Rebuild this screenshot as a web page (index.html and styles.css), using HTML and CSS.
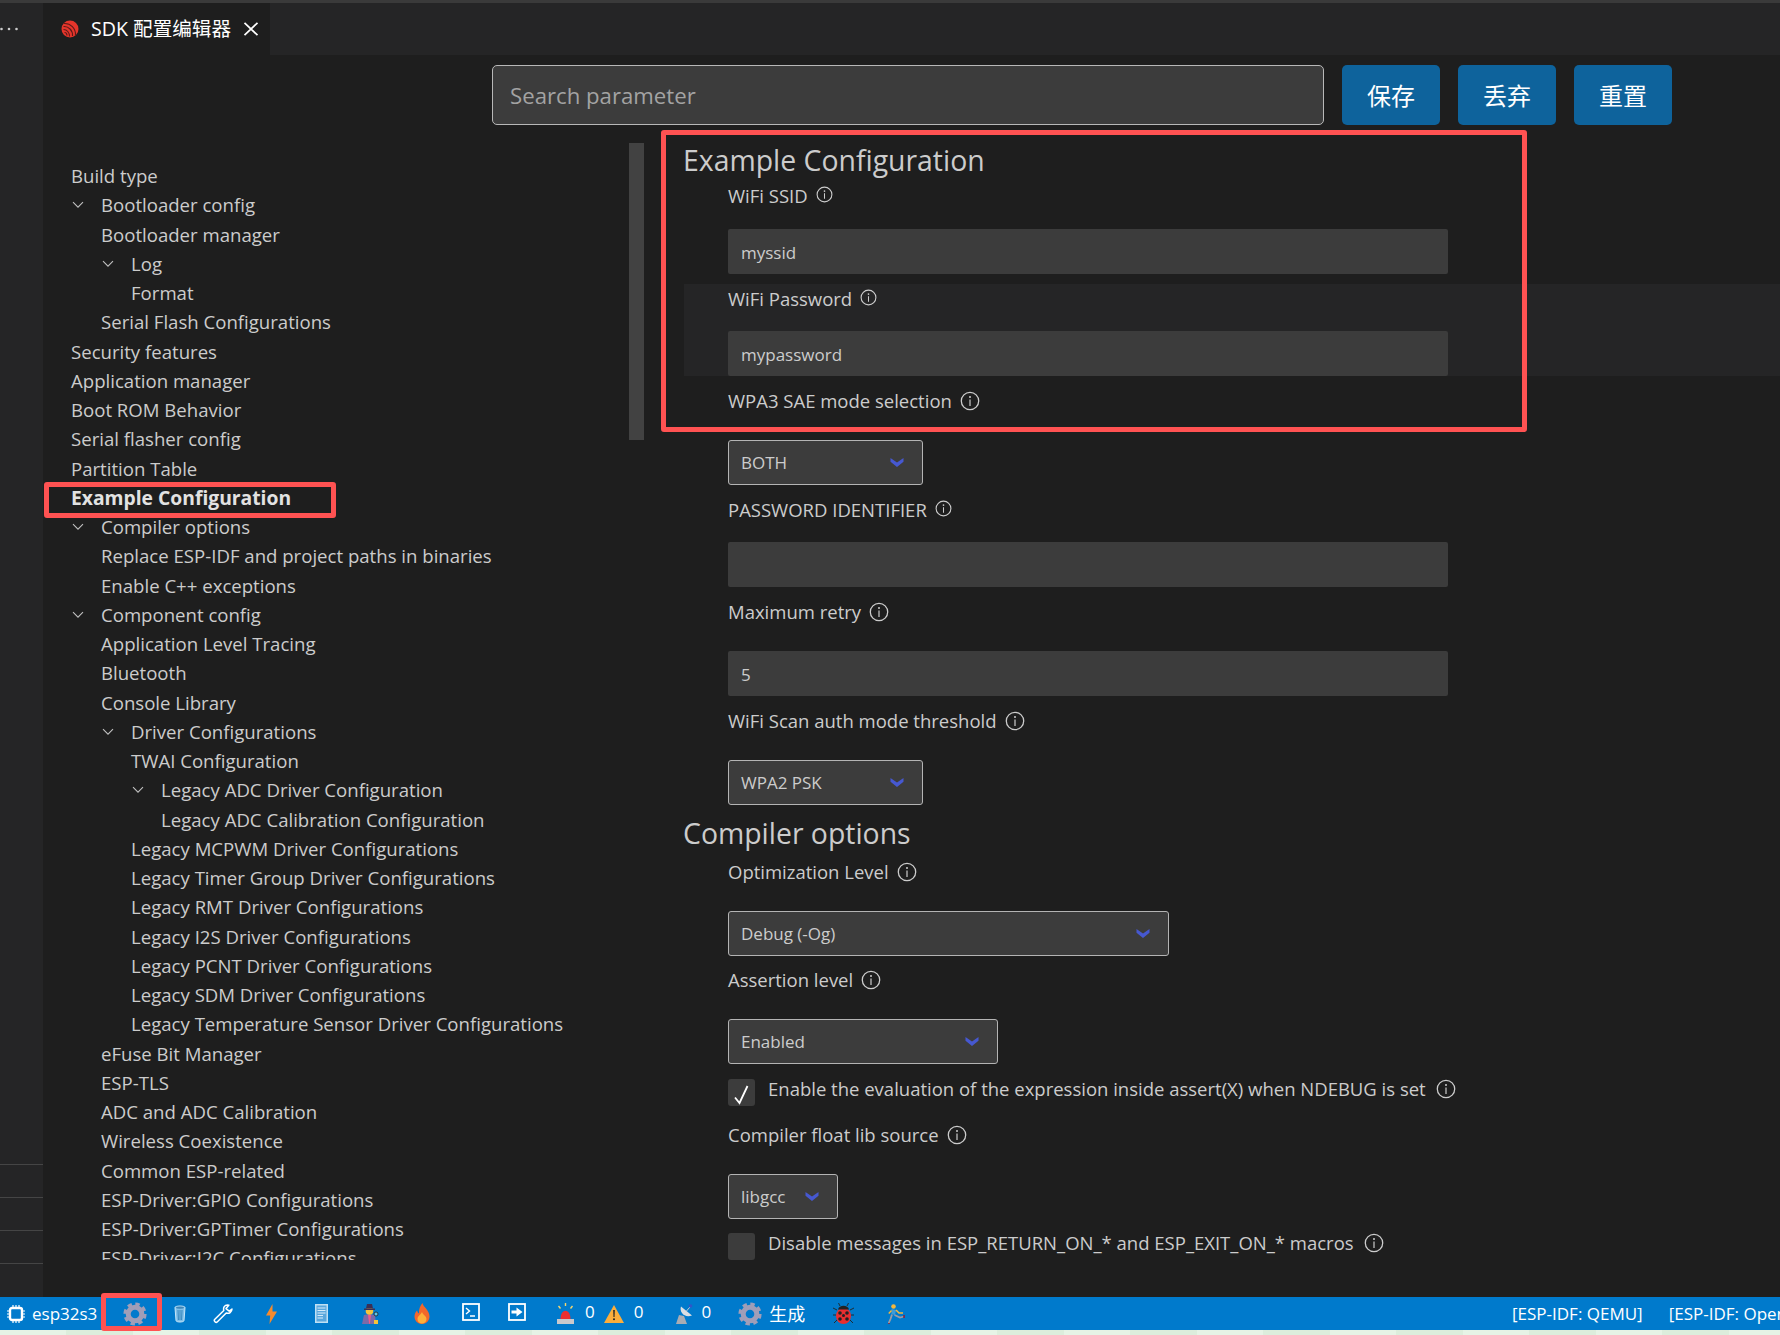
FILE: index.html
```html
<!DOCTYPE html>
<html lang="zh">
<head>
<meta charset="utf-8">
<title>SDK 配置编辑器</title>
<link rel="stylesheet" href="styles.css">
</head>
<body>
<svg class="defs" width="0" height="0" aria-hidden="true">
  <symbol id="info" viewBox="0 0 20 20"><circle cx="10" cy="10" r="8.7" fill="none" stroke="currentColor" stroke-width="1.3"/><circle cx="10" cy="6" r="1" fill="currentColor"/><rect x="9.4" y="8.5" width="1.2" height="6.5" fill="currentColor"/></symbol>
  <symbol id="chev" viewBox="0 0 14 9"><path d="M.5 0 7 4.600 13.500 0V3.800L7 9 .5 3.800Z" fill="currentColor"/></symbol>
  <symbol id="twisty" viewBox="0 0 12 8"><path d="M1 1.2 6 6.200 11 1.200" fill="none" stroke="currentColor" stroke-width="1.1"/></symbol>
  <symbol id="gear" viewBox="0 0 24 24"><circle cx="12" cy="12" r="6.800" fill="none" stroke="#a09eb8" stroke-width="5"/><circle cx="12" cy="12" r="9.800" fill="none" stroke="#a09eb8" stroke-width="3.600" stroke-dasharray="4.300 3.400"/></symbol>
</svg>
<div class="window">
  <div class="top-strip"></div>
  <header class="tabbar">
    <div class="more"><svg class="more-dots" viewBox="0 0 20 4"><circle cx="1.500" cy="2" r="1.300" fill="#ccc"/><circle cx="9" cy="2" r="1.300" fill="#ccc"/><circle cx="16.500" cy="2" r="1.300" fill="#ccc"/></svg></div>
    <div class="tab">
      <svg class="tab-logo" viewBox="0 0 18 18"><circle cx="9" cy="9" r="8.500" fill="#e5352b"/><path d="M3 3.500C9.500 3 15 8.500 14.500 15.500M2.500 6.500C7.500 6 12 10.500 11.500 16M2.500 9.500C6 9.500 8.500 12.500 8.500 16.500M3.500 12.500C5 12.500 6 14 6 15.500" fill="none" stroke="#5b1a18" stroke-width="1.100"/></svg>
      <span class="tab-title">SDK 配置编辑器</span>
      <svg class="tab-close" viewBox="0 0 16 14"><path d="M1.500 .8 14.500 13.200M14.500 .8 1.500 13.200" stroke="#fff" stroke-width="1.700" fill="none"/></svg>
    </div>
  </header>
  <div class="workbench">
    <aside class="activity">
      <div class="activity-rows">
        <div class="activity-row"></div>
        <div class="activity-row"></div>
        <div class="activity-row"></div>
        <div class="activity-row"></div>
      </div>
    </aside>
    <main class="editor">
      <div class="searchbar">
        <div class="search">Search parameter</div>
        <button class="action">保存</button>
        <button class="action">丢弃</button>
        <button class="action">重置</button>
      </div>
      <div class="panes">
        <nav class="tree">
          <div class="scrollbar"></div>
          <div class="node l0">Build type</div>
          <div class="node l1"><svg class="twisty"><use href="#twisty"/></svg>Bootloader config</div>
          <div class="node l1">Bootloader manager</div>
          <div class="node l2"><svg class="twisty"><use href="#twisty"/></svg>Log</div>
          <div class="node l2">Format</div>
          <div class="node l1">Serial Flash Configurations</div>
          <div class="node l0">Security features</div>
          <div class="node l0">Application manager</div>
          <div class="node l0">Boot ROM Behavior</div>
          <div class="node l0">Serial flasher config</div>
          <div class="node l0">Partition Table</div>
          <div class="node l0 active">Example Configuration</div>
          <div class="node l1"><svg class="twisty"><use href="#twisty"/></svg>Compiler options</div>
          <div class="node l1">Replace ESP-IDF and project paths in binaries</div>
          <div class="node l1">Enable C++ exceptions</div>
          <div class="node l1"><svg class="twisty"><use href="#twisty"/></svg>Component config</div>
          <div class="node l1">Application Level Tracing</div>
          <div class="node l1">Bluetooth</div>
          <div class="node l1">Console Library</div>
          <div class="node l2"><svg class="twisty"><use href="#twisty"/></svg>Driver Configurations</div>
          <div class="node l2">TWAI Configuration</div>
          <div class="node l3"><svg class="twisty"><use href="#twisty"/></svg>Legacy ADC Driver Configuration</div>
          <div class="node l3">Legacy ADC Calibration Configuration</div>
          <div class="node l2">Legacy MCPWM Driver Configurations</div>
          <div class="node l2">Legacy Timer Group Driver Configurations</div>
          <div class="node l2">Legacy RMT Driver Configurations</div>
          <div class="node l2">Legacy I2S Driver Configurations</div>
          <div class="node l2">Legacy PCNT Driver Configurations</div>
          <div class="node l2">Legacy SDM Driver Configurations</div>
          <div class="node l2">Legacy Temperature Sensor Driver Configurations</div>
          <div class="node l1">eFuse Bit Manager</div>
          <div class="node l1">ESP-TLS</div>
          <div class="node l1">ADC and ADC Calibration</div>
          <div class="node l1">Wireless Coexistence</div>
          <div class="node l1">Common ESP-related</div>
          <div class="node l1">ESP-Driver:GPIO Configurations</div>
          <div class="node l1">ESP-Driver:GPTimer Configurations</div>
          <div class="node l1">ESP-Driver:I2C Configurations</div>
        </nav>
        <section class="settings">
          <h2 class="group first">Example Configuration</h2>
          <div class="field tight">
            <div class="label">WiFi SSID<svg class="info small"><use href="#info"/></svg></div>
            <div class="textbox">myssid</div>
          </div>
          <div class="field tight shaded">
            <div class="label">WiFi Password<svg class="info small"><use href="#info"/></svg></div>
            <div class="textbox">mypassword</div>
          </div>
          <div class="field">
            <div class="label">WPA3 SAE mode selection<svg class="info"><use href="#info"/></svg></div>
            <div class="select w-both">BOTH<svg class="chev"><use href="#chev"/></svg></div>
          </div>
          <div class="field tight">
            <div class="label">PASSWORD IDENTIFIER<svg class="info small"><use href="#info"/></svg></div>
            <div class="textbox"></div>
          </div>
          <div class="field">
            <div class="label">Maximum retry<svg class="info"><use href="#info"/></svg></div>
            <div class="textbox">5</div>
          </div>
          <div class="field">
            <div class="label">WiFi Scan auth mode threshold<svg class="info"><use href="#info"/></svg></div>
            <div class="select w-both">WPA2 PSK<svg class="chev"><use href="#chev"/></svg></div>
          </div>
          <h2 class="group">Compiler options</h2>
          <div class="field">
            <div class="label">Optimization Level<svg class="info"><use href="#info"/></svg></div>
            <div class="select w-debug">Debug (-Og)<svg class="chev"><use href="#chev"/></svg></div>
          </div>
          <div class="field">
            <div class="label">Assertion level<svg class="info"><use href="#info"/></svg></div>
            <div class="select w-enabled">Enabled<svg class="chev"><use href="#chev"/></svg></div>
          </div>
          <div class="check-row">
            <span class="checkbox"><svg class="tick" viewBox="0 0 18 20"><path d="M2 12.500 6.500 18 14.500 1" fill="none" stroke="#fff" stroke-width="1.800"/></svg></span>
            <span class="check-label">Enable the evaluation of the expression inside assert(X) when NDEBUG is set<svg class="info"><use href="#info"/></svg></span>
          </div>
          <div class="field after-check">
            <div class="label">Compiler float lib source<svg class="info"><use href="#info"/></svg></div>
            <div class="select w-libgcc">libgcc<svg class="chev"><use href="#chev"/></svg></div>
          </div>
          <div class="check-row second">
            <span class="checkbox"></span>
            <span class="check-label">Disable messages in ESP_RETURN_ON_* and ESP_EXIT_ON_* macros<svg class="info"><use href="#info"/></svg></span>
          </div>
        </section>
      </div>
    </main>
  </div>
  <footer class="statusbar">
    <div class="status-target">
      <svg class="i-chip" viewBox="0 0 20 20"><rect x="4" y="4" width="12" height="12" rx="2" fill="none" stroke="#fff" stroke-width="2.400"/><path d="M7 1V4M10 1V4M13 1V4M7 16V19M10 16V19M13 16V19M1 7H4M1 10H4M1 13H4M16 7H19M16 10H19M16 13H19" stroke="#fff" stroke-width="1.200"/></svg>
      <span>esp32s3</span>
    </div>
    <div class="cell"><svg class="i-gear"><use href="#gear"/></svg></div>
    <div class="cell"><svg class="i-trash" viewBox="0 0 12 18"><path d="M1 2.500C1 .5 11 .5 11 2.500L10 15.500C10 17.500 2 17.500 2 15.500Z" fill="#7fc0ea" stroke="#c7e6f8" stroke-width="1"/><ellipse cx="6" cy="2.600" rx="4" ry="1.200" fill="#3f86b8"/><path d="M4 5 4.400 15M6 5V15M8 5 7.600 15" stroke="#2f7fb5" stroke-width=".9"/></svg></div>
    <div class="cell"><svg class="i-wrench" viewBox="0 0 20 20"><path d="M14.500 1C11.500 1 10 3.500 10.800 6.500L1.600 15.500C.5 16.800 2.800 19.200 4.200 18L13.200 9C16.200 10 18.800 8.200 19 5L16.200 7.200 13 4.600 15.800 1.200Z" fill="none" stroke="#fff" stroke-width="1.500" stroke-linejoin="round"/></svg></div>
    <div class="cell"><svg class="i-bolt" viewBox="0 0 11 20"><path d="M6.500 0 0 11.500H4.200L3.500 20 11 7.500H6.500Z" fill="#f58a2d"/></svg></div>
    <div class="cell"><svg class="i-book" viewBox="0 0 13 19"><rect width="13" height="19" fill="#bfe0f4"/><rect x="1.500" y="1.500" width="10" height="16" fill="#5aa7dc"/><path d="M2.500 4H10.500M2.500 6.500H10.500M2.500 9H10.500M2.500 11.500H8M2.500 14H8" stroke="#d6ecfa" stroke-width="1.200"/></svg></div>
    <div class="cell"><svg class="i-spy" viewBox="0 0 19 21"><path d="M2 21 4 12 9.500 11 15 12 16 21Z" fill="#7b6aa8"/><path d="M8 12H11L9.800 21H9.200Z" fill="#f05a8a"/><circle cx="9.500" cy="8" r="3.800" fill="#f5c33b"/><path d="M4 5.500H15V7H4Z" fill="#3a2f55"/><path d="M6 5.500 7 1H12L13 5.500Z" fill="#3a2f55"/><circle cx="16" cy="11" r="2" fill="#5ec7e8" stroke="#222" stroke-width=".8"/><rect x="14" y="17" width="4" height="4" fill="#f5c33b"/></svg></div>
    <div class="cell"><svg class="i-fire" viewBox="0 0 16 21"><path d="M8.500 0C9 4 15.500 7 15.500 13.500 15.500 18 12 21 8 21S.5 18 .5 13.500C.5 10.500 2 8.500 3 7.500 3.500 9 4 10 5 10.500 4.500 6 6.500 2.500 8.500 0Z" fill="#f4672a"/><path d="M8 9C9 12 12.500 13 12.500 16 12.500 18.800 10.500 20.500 8 20.500S3.500 18.800 3.500 16C3.500 13 6.500 12 8 9Z" fill="#fdb03a"/></svg></div>
    <div class="cell"><svg class="i-term" viewBox="0 0 18 18"><rect x="1" y="1" width="16" height="16" fill="none" stroke="#fff" stroke-width="1.800"/><path d="M4 5 7.500 8 4 11M8 13H13" fill="none" stroke="#fff" stroke-width="1.400"/></svg></div>
    <div class="cell"><svg class="i-term" viewBox="0 0 18 18"><rect x="1" y="1" width="16" height="16" fill="none" stroke="#fff" stroke-width="1.800"/><path d="M3.500 7.500H8.500V4.500L14.500 9 8.500 13.500V10.500H3.500Z" fill="#fff"/></svg></div>
    <div class="status-counts">
      <svg class="i-siren" viewBox="0 0 17 21"><path d="M3.500 16C3.500 5 13.500 5 13.500 16Z" fill="#ee2e31"/><rect y="16" width="17" height="5" fill="#c9c9cc"/><path d="M8.500 0V3M1.500 3 3.500 5.500M15.500 3 13.500 5.500" stroke="#f5d76e" stroke-width="1.400"/></svg>
      <span class="count c-siren">0</span>
      <svg class="i-warn" viewBox="0 0 20 18"><path d="M10 0 20 18H0Z" fill="#fbae3c"/><path d="M9.200 5H10.800L10.500 12H9.500Z" fill="#222"/><circle cx="10" cy="14.300" r="1" fill="#222"/></svg>
      <span class="count c-warn">0</span>
      <svg class="i-dish" viewBox="0 0 18 20"><path d="M3 11 0 20H11L8 12Z" fill="#a9acb3"/><path d="M5 2.500C3 8 8.500 14.500 16 11.500Z" fill="#dcdee2"/><path d="M10.500 7 14 3" stroke="#c9ccd1" stroke-width="1"/><circle cx="14.500" cy="2" r="1.800" fill="#3256c8"/></svg>
      <span class="count c-dish">0</span>
      <svg class="i-gear2"><use href="#gear"/></svg>
      <span class="build">生成</span>
      <svg class="i-bug" viewBox="0 0 21 21"><path d="M4 7 0 5M3 12H0M4 17 1 20M17 7 21 5M18 12H21M17 17 20 20M7 3 5.500 0M14 3 15.500 0" stroke="#222" stroke-width=".9"/><ellipse cx="10.500" cy="13" rx="7.500" ry="8" fill="#e92e30"/><path d="M5 6.500C6 1.500 15 1.500 16 6.500Z" fill="#222"/><circle cx="7" cy="10" r="1.800" fill="#222"/><circle cx="14" cy="10" r="1.800" fill="#222"/><circle cx="7" cy="16" r="1.800" fill="#222"/><circle cx="14" cy="16" r="1.800" fill="#222"/><circle cx="10.500" cy="12.500" r="1.500" fill="#222"/></svg>
      <svg class="i-run" viewBox="0 0 18 20"><circle cx="5.500" cy="2.500" r="2.300" fill="#f5b83b"/><path d="M3.500 5 8 6 7 11 3.500 10Z" fill="#3f9bd8"/><path d="M8 6 11 9H15" fill="none" stroke="#f5b83b" stroke-width="1.500"/><path d="M3.500 6.500 0.800 9.500" fill="none" stroke="#f5b83b" stroke-width="1.400"/><path d="M4 10.500 2.500 15 0.500 19.500" fill="none" stroke="#9c9ca4" stroke-width="1.800"/><path d="M6.500 11 12 13.500 16 12.500" fill="none" stroke="#9c9ca4" stroke-width="1.800"/><path d="M0 20H2M16 11V14" stroke="#8b1c3a" stroke-width="1.500"/></svg>
    </div>
    <div class="status-right">
      <span>[ESP-IDF: QEMU]</span>
      <span>[ESP-IDF: OpenOCD Server]</span>
    </div>
  </footer>
  <div class="bottom-strip"></div>
  <div class="callout callout-settings"></div>
  <div class="callout callout-tree"></div>
  <div class="callout callout-status"></div>
</div>
</body>
</html>
```

FILE: styles.css
```css
* { box-sizing: border-box; }
html, body { margin: 0; padding: 0; height: 100%; overflow: hidden; background: #1e1e1e; }
body {
  font-family: "Open Sans", "Noto Sans CJK SC", sans-serif;
  color: #cccccc;
  font-size: 18.5px;
}
.defs { position: absolute; }

.window {
  position: relative;
  width: 1780px;
  height: 1335px;
  display: grid;
  grid-template-rows: 3px 52px 1fr 33px 5px;
  overflow: hidden;
}
.top-strip { background: #3a3a3a; }

/* tab bar */
.tabbar { display: flex; background: #252526; }
.more {
  width: 43px;
  display: flex;
  align-items: center;
  padding-bottom: 0;
}
.more-dots { width: 20px; height: 4px; }
.tab {
  width: 227px;
  background: #1e1e1e;
  display: flex;
  align-items: center;
  padding-left: 18px;
}
.tab-logo { width: 18px; height: 18px; }
.tab-title {
  margin-left: 12px;
  color: #ffffff;
  font-size: 19.6px;
  line-height: 52px;
  white-space: nowrap;
}
.tab-close { width: 16px; height: 14px; margin-left: 12px; }

/* workbench */
.workbench { display: grid; grid-template-columns: 43px 1fr; min-height: 0; }
.activity { background: #252526; display: flex; flex-direction: column; justify-content: flex-end; }
.activity-rows { padding-bottom: 33px; }
.activity-row { height: 33px; border-bottom: 1px solid #454545; }

.editor { min-width: 0; display: flex; flex-direction: column; }
.searchbar {
  display: flex;
  gap: 18px;
  padding: 10px 0 0 449px;
  height: 70px;
  flex: none;
}
.search {
  width: 832px;
  height: 60px;
  background: #3c3c3c;
  border: 1px solid #b8b8b8;
  border-radius: 5px;
  padding-left: 17px;
  color: #a3a3a3;
  font-size: 22.2px;
  line-height: 60px;
}
.action {
  width: 98px;
  height: 60px;
  border: 0;
  border-radius: 5px;
  background: #0e639c;
  color: #ffffff;
  font: 24px/60px "Noto Sans CJK SC", sans-serif;
  padding: 0;
}

.panes { flex: 1; min-height: 0; display: grid; grid-template-columns: 601px 1fr; }

/* tree */
.tree {
  position: relative;
  margin-top: 18px;
  height: 1117px;
  padding-top: 18px;
  overflow: hidden;
}
.scrollbar {
  position: absolute;
  top: 0;
  right: 0;
  width: 15px;
  height: 297px;
  background: #424242;
}
.node {
  position: relative;
  height: 29.26px;
  line-height: 29.26px;
  white-space: nowrap;
  font-size: 18.6px;
}
.l0 { padding-left: 28px; }
.l1 { padding-left: 58px; }
.l2 { padding-left: 88px; }
.l3 { padding-left: 118px; }
.active { font-weight: 700; font-size: 19.3px; color: #e2e2e2; }
.twisty {
  position: absolute;
  width: 12px;
  height: 8px;
  top: 11px;
  color: #c0c0c0;
  margin-left: -29px;
}

/* settings */
.settings { padding: 15px 0 0 40px; min-width: 0; }
.group {
  margin: 8px 0 5px -1px;
  height: 40px;
  font-size: 28.4px;
  line-height: 40px;
  font-weight: 400;
  color: #cccccc;
}
.group.first { margin: 0 0 2px -1px; }
.field { padding-left: 44px; margin-top: 11px; }
.group + .field { margin-top: 0; }
.group + .field + .field { margin-top: 10px; }
.label {
  display: flex;
  align-items: center;
  gap: 8px;
  height: 28px;
  line-height: 28px;
  white-space: nowrap;
}
.info { width: 20px; height: 20px; color: #cccccc; flex: none; }
.info.small { width: 17px; height: 17px; position: relative; top: -2px; }
.textbox {
  margin-top: 25px;
  height: 45px;
  width: 720px;
  background: #3c3c3c;
  border-radius: 2px;
  padding-left: 13px;
  font-size: 17px;
  line-height: 47px;
}
.tight .textbox { margin-top: 18px; }
.field.tight:first-of-type .textbox { margin-top: 19px; }
.shaded { background: #252526; margin-top: 10px; padding-top: 1px; }
.select {
  margin-top: 25px;
  height: 45px;
  display: flex;
  align-items: center;
  justify-content: space-between;
  background: #3c3c3c;
  border: 1px solid #b4b4b4;
  border-radius: 3px;
  padding: 0 18px 0 12px;
  font-size: 17px;
}
.w-both { width: 195px; }
.w-debug { width: 441px; }
.w-enabled { width: 270px; }
.w-libgcc { width: 110px; }
.chev { width: 14px; height: 9px; color: #4658d0; }

.check-row { display: flex; gap: 13px; margin: 15px 0 0 44px; }
.check-row.second { margin-top: 14px; }
.checkbox { width: 27px; height: 27px; flex: none; background: #3c3c3c; border-radius: 3px; display: flex; align-items: center; justify-content: center; }
.tick { width: 18px; height: 20px; position: relative; top: 2px; }
.check-label {
  display: flex;
  align-items: center;
  gap: 10px;
  height: 20px;
  line-height: 20px;
  white-space: nowrap;
}
.field.after-check { margin-top: 15px; }

/* status bar */
.statusbar {
  background: #007acc;
  color: #ffffff;
  font-size: 17px;
  display: grid;
  grid-template-columns: 112px 46px 44px 42px 54px 46px 50px 56px 42px 50px 1fr auto;
  align-items: center;
  white-space: nowrap;
}
.status-target { display: flex; align-items: center; gap: 6px; padding-left: 6px; }
.cell { display: flex; justify-content: center; align-items: center; }
.i-chip { width: 20px; height: 20px; }
.i-gear { width: 24px; height: 24px; }
.i-trash { width: 12px; height: 18px; }
.i-wrench { width: 20px; height: 20px; }
.i-bolt { width: 11px; height: 20px; }
.i-book { width: 13px; height: 19px; }
.i-spy { width: 19px; height: 21px; }
.i-fire { width: 16px; height: 21px; }
.i-term { width: 18px; height: 18px; position: relative; top: -2px; }
.status-counts { display: flex; align-items: center; padding-left: 15px; }
.i-siren { width: 17px; height: 21px; }
.count { line-height: 24px; position: relative; top: -2px; }
.c-siren { margin-left: 11px; }
.c-warn { margin-left: 10px; }
.c-dish { margin-left: 7px; }
.i-warn { width: 20px; height: 18px; margin-left: 9px; }
.i-dish { width: 18px; height: 20px; margin-left: 33px; }
.i-gear2 { width: 24px; height: 24px; margin-left: 27px; }
.build { margin-left: 7px; font-size: 18px; position: relative; top: -1px; }
.i-bug { width: 21px; height: 21px; margin-left: 28px; }
.i-run { width: 18px; height: 20px; margin-left: 34px; }
.status-right { display: flex; gap: 26px; width: 268px; overflow: hidden; }

.bottom-strip { background: repeating-linear-gradient(90deg, #e6f3e6 0 66px, #dceddc 66px 133px); }

/* annotations */
.callout { position: absolute; border: 5px solid #ff5252; border-radius: 3px; pointer-events: none; }
.callout-settings { left: 661px; top: 130px; width: 866px; height: 302px; }
.callout-tree { left: 44px; top: 482px; width: 292px; height: 36px; }
.callout-status { left: 101px; top: 1293px; width: 61px; height: 38px; }
```
